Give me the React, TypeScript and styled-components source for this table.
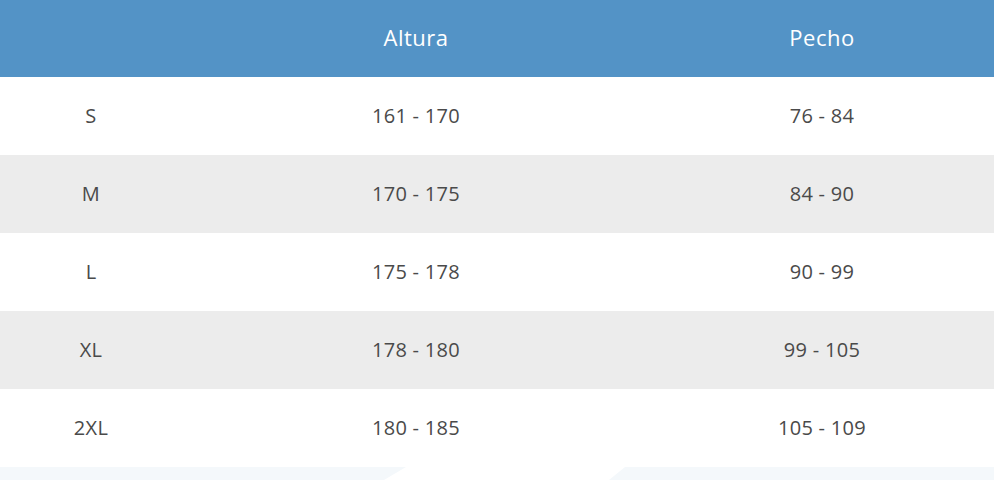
import React from "react";
import styled, { createGlobalStyle } from "styled-components";

const GlobalStyle = createGlobalStyle`
  html, body {
    margin: 0;
    padding: 0;
    background: #ffffff;
  }
`;

const Page = styled.div`
  width: 994px;
  font-family: "Open Sans", "Liberation Sans", sans-serif;
`;

const Table = styled.table`
  width: 100%;
  border-collapse: collapse;
  table-layout: fixed;
`;

const HeadRow = styled.tr`
  height: 77px;
  background: #5393c6;
`;

const HeadCell = styled.th`
  padding: 0 0 3px;
  font-size: 22px;
  font-weight: 500;
  letter-spacing: 0.5px;
  color: #ffffff;
  text-align: center;
  vertical-align: middle;
`;

const Row = styled.tr<{ $striped: boolean }>`
  height: 78px;
  background: ${(p) => (p.$striped ? "#ececec" : "#ffffff")};
`;

const Cell = styled.td`
  padding: 0 0 1px;
  font-size: 20px;
  font-weight: 400;
  letter-spacing: 0.3px;
  color: #4a4a4a;
  text-align: center;
  vertical-align: middle;
`;

const Strip = styled.div`
  height: 13px;
  background: #f4f8fb;
  overflow: hidden;
  line-height: 0;
`;

const sizes = [
  { size: "S", height: "161 - 170", chest: "76 - 84" },
  { size: "M", height: "170 - 175", chest: "84 - 90" },
  { size: "L", height: "175 - 178", chest: "90 - 99" },
  { size: "XL", height: "178 - 180", chest: "99 - 105" },
  { size: "2XL", height: "180 - 185", chest: "105 - 109" },
];

export default function App() {
  return (
    <Page>
      <GlobalStyle />
      <Table>
        <colgroup>
          <col style={{ width: 182 }} />
          <col style={{ width: 468 }} />
          <col style={{ width: 344 }} />
        </colgroup>
        <thead>
          <HeadRow>
            <HeadCell></HeadCell>
            <HeadCell>Altura</HeadCell>
            <HeadCell>Pecho</HeadCell>
          </HeadRow>
        </thead>
        <tbody>
          {sizes.map((s, i) => (
            <Row key={s.size} $striped={i % 2 === 1}>
              <Cell>{s.size}</Cell>
              <Cell>{s.height}</Cell>
              <Cell>{s.chest}</Cell>
            </Row>
          ))}
        </tbody>
      </Table>
      <Strip>
        <svg width="994" height="13" viewBox="0 0 994 13">
          <polygon points="406,0 625,0 609,13 384,13" fill="#ffffff" />
        </svg>
      </Strip>
    </Page>
  );
}
